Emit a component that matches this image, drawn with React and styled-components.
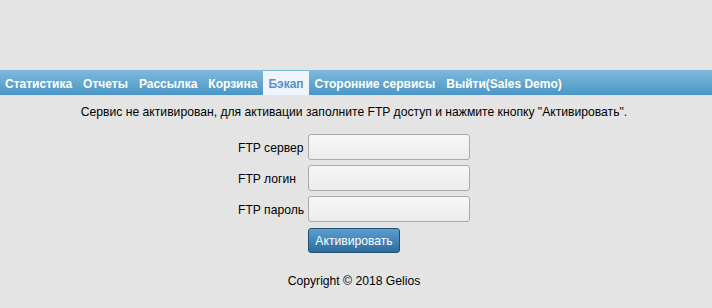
import React from "react";
import styled, { createGlobalStyle } from "styled-components";

const GlobalStyle = createGlobalStyle`
  html, body {
    margin: 0;
    padding: 0;
    background: #e4e4e4;
    font-family: "Liberation Sans", Arial, sans-serif;
    font-size: 12.15px;
    color: #000;
  }
`;

const menu = [
  "Статистика",
  "Отчеты",
  "Рассылка",
  "Корзина",
  "Бэкап",
  "Сторонние сервисы",
  "Выйти(Sales Demo)",
];

const fields = ["FTP сервер", "FTP логин", "FTP пароль"];

const App = () => {
  return (
    <Page>
      <GlobalStyle />
      <Menu>
        {menu.map((item) => (
          <MenuItem key={item} $active={item === "Бэкап"}>
            {item}
          </MenuItem>
        ))}
      </Menu>
      <Message>
        Сервис не активирован, для активации заполните FTP доступ и нажмите
        кнопку "Активировать".
      </Message>
      <Form>
        {fields.map((f) => (
          <Row key={f}>
            <Label>{f}</Label>
            <Input type={f === "FTP пароль" ? "password" : "text"} />
          </Row>
        ))}
        <Row>
          <span />
          <Button>Активировать</Button>
        </Row>
      </Form>
      <Footer>Copyright © 2018 Gelios</Footer>
    </Page>
  );
};

//**** styled components ****
const Page = styled.div`
  padding-top: 70px;
  height: 238px;
`;

const Menu = styled.nav`
  height: 25px;
  display: flex;
  align-items: stretch;
  background: linear-gradient(#7ebadb, #4b96c6);
`;

const MenuItem = styled.a`
  display: flex;
  align-items: center;
  padding: 1px 5.5px 0 5.5px;
  margin-top: 1px;
  font-weight: bold;
  font-size: 12px;
  color: ${(p) => (p.$active ? "#5e8fcc" : "#fff")};
  background: ${(p) => (p.$active ? "#eef4fb" : "transparent")};
  cursor: pointer;
  white-space: nowrap;
  &:first-child {
    padding-left: 5px;
  }
`;

const Message = styled.p`
  margin: 10px 0 0;
  text-align: center;
  line-height: 14px;
  padding-right: 4px;
`;

const Form = styled.div`
  margin: 15px auto 0;
  width: 232px;
  display: grid;
  grid-template-columns: 70px 162px;
  row-gap: 5px;
  padding-right: 4px;
`;

const Row = styled.div`
  display: contents;
`;

const Label = styled.label`
  display: flex;
  align-items: center;
  padding-top: 1px;
`;

const Input = styled.input`
  box-sizing: border-box;
  width: 162px;
  height: 26px;
  border: 1px solid #a9a9a9;
  border-radius: 3px;
  background: linear-gradient(#f7f7f7, #ebebeb);
  outline: none;
`;

const Button = styled.button`
  justify-self: start;
  box-sizing: border-box;
  width: 92px;
  height: 25px;
  margin-top: 1px;
  border: 1px solid #24506f;
  border-radius: 3px;
  background: linear-gradient(#5a9fd3, #2e6c9c);
  color: #fff;
  font-family: "Liberation Sans", Arial, sans-serif;
  font-size: 12.15px;
  padding: 0;
  cursor: pointer;
`;

const Footer = styled.p`
  margin: 21px 0 0;
  text-align: center;
  padding-right: 4px;
`;

export default App;
